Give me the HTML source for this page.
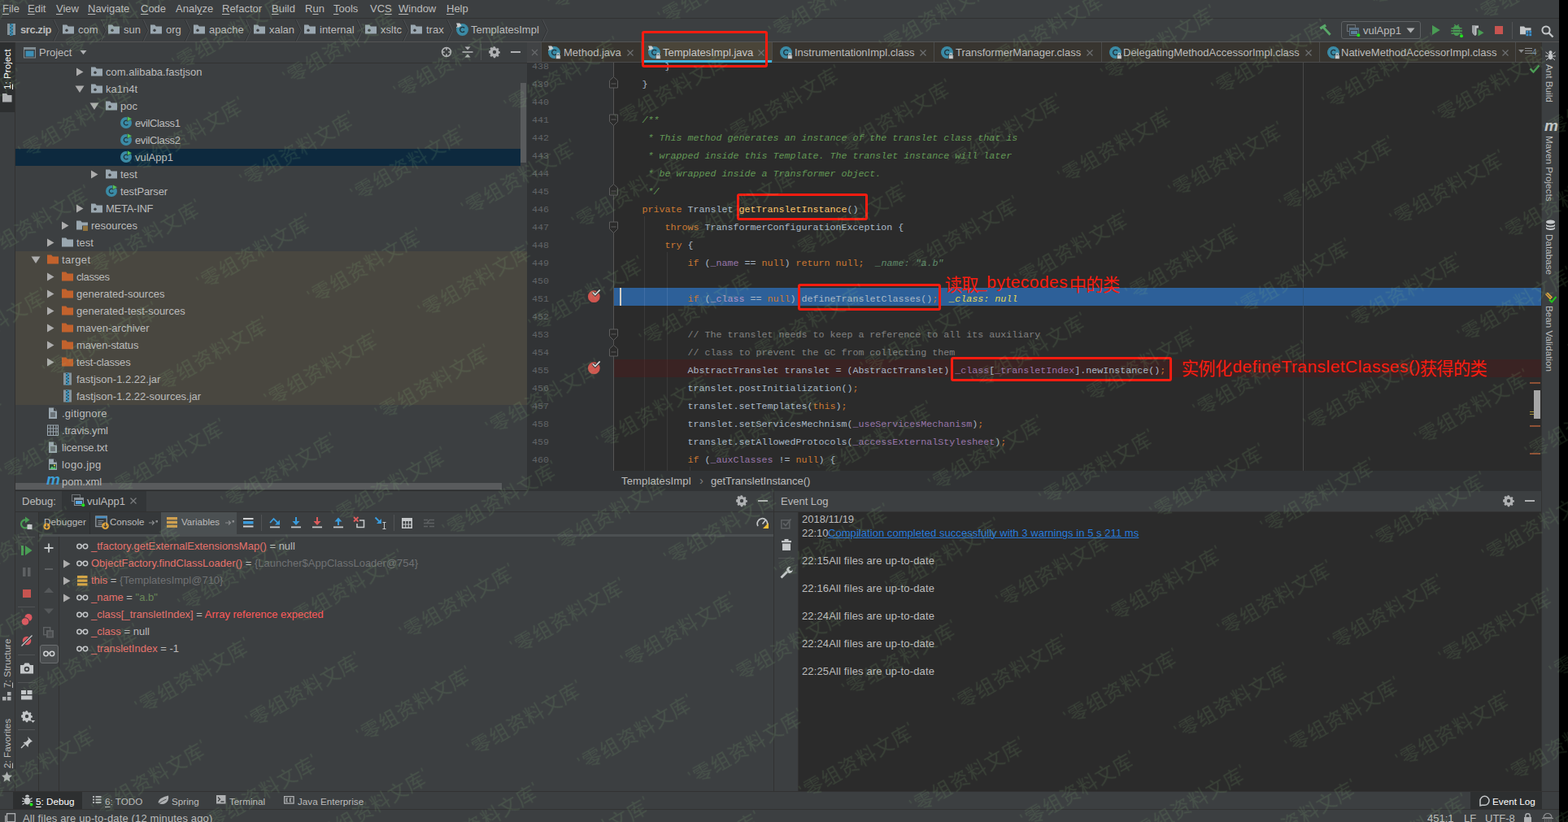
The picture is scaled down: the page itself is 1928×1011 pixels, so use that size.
<!DOCTYPE html>
<html><head><meta charset="utf-8"><title>IDE</title><style>html,body{margin:0;padding:0}
body{width:1928px;height:1011px;overflow:hidden;background:#3c3f41;position:relative;font-family:"Liberation Sans",sans-serif;font-size:13px;color:#bbbbbb}
body>div,body>span,body>svg,.a{position:absolute;display:block}
span{white-space:pre;line-height:16px}
.m{font-family:"Liberation Mono",monospace}

.code span{font-family:"Liberation Mono",monospace;font-size:11.667px;line-height:22px}
.code b{font-weight:normal}
.ln{color:#606366}
u{text-decoration-thickness:1px;text-underline-offset:1.5px}
</style></head><body>
<div style="left:0px;top:0px;width:1917px;height:22px;background:#3c3f41;"></div>
<div style="left:0px;top:22px;width:1917px;height:1px;background:#323232;"></div>
<span style="left:3px;top:2.50px;color:#bbbbbb;font-size:13px;"><u>F</u>ile</span>
<span style="left:34px;top:2.50px;color:#bbbbbb;font-size:13px;"><u>E</u>dit</span>
<span style="left:69px;top:2.50px;color:#bbbbbb;font-size:13px;"><u>V</u>iew</span>
<span style="left:108px;top:2.50px;color:#bbbbbb;font-size:13px;"><u>N</u>avigate</span>
<span style="left:173px;top:2.50px;color:#bbbbbb;font-size:13px;"><u>C</u>ode</span>
<span style="left:216px;top:2.50px;color:#bbbbbb;font-size:13px;">Anal<u>y</u>ze</span>
<span style="left:273px;top:2.50px;color:#bbbbbb;font-size:13px;"><u>R</u>efactor</span>
<span style="left:334px;top:2.50px;color:#bbbbbb;font-size:13px;"><u>B</u>uild</span>
<span style="left:375px;top:2.50px;color:#bbbbbb;font-size:13px;">R<u>u</u>n</span>
<span style="left:410px;top:2.50px;color:#bbbbbb;font-size:13px;"><u>T</u>ools</span>
<span style="left:455px;top:2.50px;color:#bbbbbb;font-size:13px;">VC<u>S</u></span>
<span style="left:490px;top:2.50px;color:#bbbbbb;font-size:13px;"><u>W</u>indow</span>
<span style="left:549px;top:2.50px;color:#bbbbbb;font-size:13px;"><u>H</u>elp</span>
<div style="left:0px;top:23px;width:1917px;height:28px;background:#3c3f41;"></div>
<div style="left:0px;top:51px;width:1917px;height:1px;background:#555555;"></div>
<div style="left:0px;top:52px;width:18px;height:921px;background:#3c3f41;"></div>
<div style="left:18px;top:52px;width:1px;height:921px;background:#323232;"></div>
<div style="left:0px;top:52px;width:18px;height:86px;background:#2d2f30;"></div>
<div style="left:1895px;top:52px;width:22px;height:921px;background:#3c3f41;"></div>
<div style="left:1895px;top:52px;width:1px;height:921px;background:#323232;"></div>
<div style="left:1917px;top:0px;width:11px;height:1011px;background:#000000;"></div>
<svg style="left:9px;top:29px;" width="10" height="15" viewBox="0 0 10 15"><rect x="0" y="0" width="10" height="14" fill="#87939a"/><rect x="3" y="0" width="4" height="16" fill="#3d8fb5"/><path d="M3 1h2M5 3h2M3 5h2M5 7h2M3 9h2M5 11h2M3 13h2M5 15h2" stroke="#2b4450" stroke-width="1"/></svg>
<span style="left:25px;top:28.50px;color:#bbbbbb;font-size:13px;font-weight:bold;letter-spacing:-.45px">src.zip</span>
<svg style="left:76px;top:28px;" width="16" height="16" viewBox="0 0 16 16"><path d="M1 2.5h5.2l1.6 2H15v9H1z" fill="#9aa7b0"/><circle cx="6" cy="9.2" r="1.7" fill="#3c3f41"/></svg>
<span style="left:96px;top:28.50px;color:#bbbbbb;font-size:13px;">com</span>
<svg style="left:132px;top:28px;" width="16" height="16" viewBox="0 0 16 16"><path d="M1 2.5h5.2l1.6 2H15v9H1z" fill="#9aa7b0"/><circle cx="6" cy="9.2" r="1.7" fill="#3c3f41"/></svg>
<span style="left:152px;top:28.50px;color:#bbbbbb;font-size:13px;">sun</span>
<svg style="left:184px;top:28px;" width="16" height="16" viewBox="0 0 16 16"><path d="M1 2.5h5.2l1.6 2H15v9H1z" fill="#9aa7b0"/><circle cx="6" cy="9.2" r="1.7" fill="#3c3f41"/></svg>
<span style="left:204px;top:28.50px;color:#bbbbbb;font-size:13px;">org</span>
<svg style="left:237px;top:28px;" width="16" height="16" viewBox="0 0 16 16"><path d="M1 2.5h5.2l1.6 2H15v9H1z" fill="#9aa7b0"/><circle cx="6" cy="9.2" r="1.7" fill="#3c3f41"/></svg>
<span style="left:257px;top:28.50px;color:#bbbbbb;font-size:13px;">apache</span>
<svg style="left:311px;top:28px;" width="16" height="16" viewBox="0 0 16 16"><path d="M1 2.5h5.2l1.6 2H15v9H1z" fill="#9aa7b0"/><circle cx="6" cy="9.2" r="1.7" fill="#3c3f41"/></svg>
<span style="left:331px;top:28.50px;color:#bbbbbb;font-size:13px;">xalan</span>
<svg style="left:373px;top:28px;" width="16" height="16" viewBox="0 0 16 16"><path d="M1 2.5h5.2l1.6 2H15v9H1z" fill="#9aa7b0"/><circle cx="6" cy="9.2" r="1.7" fill="#3c3f41"/></svg>
<span style="left:393px;top:28.50px;color:#bbbbbb;font-size:13px;">internal</span>
<svg style="left:448px;top:28px;" width="16" height="16" viewBox="0 0 16 16"><path d="M1 2.5h5.2l1.6 2H15v9H1z" fill="#9aa7b0"/><circle cx="6" cy="9.2" r="1.7" fill="#3c3f41"/></svg>
<span style="left:468px;top:28.50px;color:#bbbbbb;font-size:13px;">xsltc</span>
<svg style="left:504px;top:28px;" width="16" height="16" viewBox="0 0 16 16"><path d="M1 2.5h5.2l1.6 2H15v9H1z" fill="#9aa7b0"/><circle cx="6" cy="9.2" r="1.7" fill="#3c3f41"/></svg>
<span style="left:524px;top:28.50px;color:#bbbbbb;font-size:13px;">trax</span>
<svg style="left:560px;top:28px;" width="17" height="17" viewBox="0 0 16 16"><circle cx="8" cy="8" r="7" fill="#3b8ba6"/><path d="M10.400 9.900a2.900 2.900 0 1 1 0-3.800" fill="none" stroke="#21343d" stroke-width="1.300"/><path d="M1 0.5l4 0 2 3-4 2.2z" fill="#c9ccce"/><path d="M1.2 5.5l2.2-2" stroke="#c9ccce" stroke-width="1"/></svg>
<span style="left:579px;top:28.50px;color:#bbbbbb;font-size:13px;">TemplatesImpl</span>
<svg style="left:65px;top:24px;" width="8" height="27" viewBox="0 0 8 27"><path d="M0.5 0.5l6 13-6 13" fill="none" stroke="#2f3133" stroke-width="1"/><path d="M1.5 0.5l6 13-6 13" fill="none" stroke="#505355" stroke-width="1"/></svg>
<svg style="left:123px;top:24px;" width="8" height="27" viewBox="0 0 8 27"><path d="M0.5 0.5l6 13-6 13" fill="none" stroke="#2f3133" stroke-width="1"/><path d="M1.5 0.5l6 13-6 13" fill="none" stroke="#505355" stroke-width="1"/></svg>
<svg style="left:175px;top:24px;" width="8" height="27" viewBox="0 0 8 27"><path d="M0.5 0.5l6 13-6 13" fill="none" stroke="#2f3133" stroke-width="1"/><path d="M1.5 0.5l6 13-6 13" fill="none" stroke="#505355" stroke-width="1"/></svg>
<svg style="left:227px;top:24px;" width="8" height="27" viewBox="0 0 8 27"><path d="M0.5 0.5l6 13-6 13" fill="none" stroke="#2f3133" stroke-width="1"/><path d="M1.5 0.5l6 13-6 13" fill="none" stroke="#505355" stroke-width="1"/></svg>
<svg style="left:301px;top:24px;" width="8" height="27" viewBox="0 0 8 27"><path d="M0.5 0.5l6 13-6 13" fill="none" stroke="#2f3133" stroke-width="1"/><path d="M1.5 0.5l6 13-6 13" fill="none" stroke="#505355" stroke-width="1"/></svg>
<svg style="left:363px;top:24px;" width="8" height="27" viewBox="0 0 8 27"><path d="M0.5 0.5l6 13-6 13" fill="none" stroke="#2f3133" stroke-width="1"/><path d="M1.5 0.5l6 13-6 13" fill="none" stroke="#505355" stroke-width="1"/></svg>
<svg style="left:438px;top:24px;" width="8" height="27" viewBox="0 0 8 27"><path d="M0.5 0.5l6 13-6 13" fill="none" stroke="#2f3133" stroke-width="1"/><path d="M1.5 0.5l6 13-6 13" fill="none" stroke="#505355" stroke-width="1"/></svg>
<svg style="left:495px;top:24px;" width="8" height="27" viewBox="0 0 8 27"><path d="M0.5 0.5l6 13-6 13" fill="none" stroke="#2f3133" stroke-width="1"/><path d="M1.5 0.5l6 13-6 13" fill="none" stroke="#505355" stroke-width="1"/></svg>
<svg style="left:549px;top:24px;" width="8" height="27" viewBox="0 0 8 27"><path d="M0.5 0.5l6 13-6 13" fill="none" stroke="#2f3133" stroke-width="1"/><path d="M1.5 0.5l6 13-6 13" fill="none" stroke="#505355" stroke-width="1"/></svg>
<svg style="left:666px;top:24px;" width="8" height="27" viewBox="0 0 8 27"><path d="M0.5 0.5l6 13-6 13" fill="none" stroke="#2f3133" stroke-width="1"/><path d="M1.5 0.5l6 13-6 13" fill="none" stroke="#505355" stroke-width="1"/></svg>
<svg style="left:1621px;top:29px;" width="18" height="18" viewBox="0 0 18 18"><path d="M2.300 6.200L9.200 2" stroke="#59a869" stroke-width="3.300"/><path d="M6.300 4.800l8.300 9" stroke="#59a869" stroke-width="2.800"/></svg>
<div style="left:1649px;top:26px;width:96px;height:20px;border:1px solid #5e6163;border-radius:3px;background:#3c3f41"></div>
<svg style="left:1656px;top:30px;" width="18" height="16" viewBox="0 0 18 16"><rect x=".5" y=".5" width="10" height="8" fill="none" stroke="#6e7275"/><rect x="3.500" y="4.500" width="11" height="9" fill="#3c3f41" stroke="#5b7184"/><rect x="4" y="5" width="10" height="2" fill="#5b7184"/><rect x="5" y="8" width="8" height="4" fill="#5b7f98"/><circle cx="14.3" cy="13.2" r="2" fill="#21e51c"/></svg>
<span style="left:1676px;top:29.50px;color:#bbbbbb;font-size:13px;">vulApp1</span>
<svg style="left:1728px;top:33px;" width="12" height="9" viewBox="0 0 12 9"><path d="M1.5 1.5h10l-5 6z" fill="#afb1b3"/></svg>
<svg style="left:1760px;top:30px;" width="11" height="14" viewBox="0 0 11 14"><path d="M1 1l9.700 6L1 13z" fill="#499c54"/></svg>
<svg style="left:1782px;top:29px;" width="18" height="18" viewBox="0 0 18 18"><path d="M5 6.500a4 4.200 0 0 1 8 0v4a4 4.500 0 0 1-8 0z" fill="#499c54"/><path d="M6.500 1l1.500 2.500M11.500 1l-1.500 2.500" stroke="#499c54" stroke-width="1.300"/><path d="M2.500 5.800h3M15.500 5.800h-3M2 9h3.500M16 9h-3.500M2.500 12.300h3M15.500 12.300h-3" stroke="#499c54" stroke-width="1.500"/><path d="M5.500 7.300h7M5.500 10.600h7" stroke="#3c3f41" stroke-width="1"/><circle cx="15" cy="15.300" r="2" fill="#21e51c"/></svg>
<svg style="left:1808px;top:29px;" width="18" height="18" viewBox="0 0 18 18"><path d="M2 2.500h8v3h-2.500v8l-1.500 1.500c-3-1.500-4-4-4-7z" fill="#c4c7c9"/><path d="M6.500 2.500v12" stroke="#3c3f41" stroke-width=".01"/><path d="M2 2.500h4v12.200c-3-1.500-4-4-4-7z" fill="#9da1a4"/><path d="M9.500 7l7 4.200-7 4.300z" fill="#499c54"/></svg>
<div style="left:1838px;top:32px;width:10px;height:10px;background:#c75450;"></div>
<div style="left:1859px;top:27px;width:1px;height:21px;background:#515355;"></div>
<svg style="left:1867px;top:29px;" width="18" height="18" viewBox="0 0 18 18"><path d="M2 3.500h5l1.500 1.800H15.500v3.200H9v4.700H2z" fill="#c4c7c9"/><rect x="9.500" y="8.800" width="2.800" height="2.800" fill="#3a91cf"/><rect x="13.300" y="8.800" width="2.800" height="2.800" fill="#3a91cf"/><rect x="9.500" y="12.400" width="2.800" height="2.800" fill="#3a91cf"/><rect x="13.300" y="12.400" width="2.800" height="2.800" fill="#3a91cf"/></svg>
<svg style="left:1894px;top:29.5px;" width="18" height="18" viewBox="0 0 18 18"><circle cx="7" cy="7" r="4.600" fill="none" stroke="#c4c7c9" stroke-width="2"/><path d="M10.500 10.500l5 5" stroke="#c4c7c9" stroke-width="2.400"/></svg>
<div style="left:19px;top:52px;width:629px;height:25px;background:#3c3f41;"></div>
<div style="left:19px;top:77px;width:629px;height:1px;background:#323232;"></div>
<svg style="left:29px;top:58px;" width="15" height="14" viewBox="0 0 15 14"><rect x=".5" y=".5" width="14" height="12.500" fill="#3c3f41" stroke="#7f8b91"/><rect x="1" y="1" width="13" height="2" fill="#7f8b91"/><rect x="2.500" y="4.500" width="10" height="7" fill="#3d8fb5"/></svg>
<span style="left:48px;top:56.50px;color:#bbbbbb;font-size:13px;">Project</span>
<svg style="left:98px;top:61px;" width="9" height="7" viewBox="0 0 9 7"><path d="M.5 1h8l-4 5z" fill="#afb1b3"/></svg>
<svg style="left:541px;top:56px;" width="16" height="16" viewBox="0 0 16 16"><circle cx="8" cy="8" r="5.400" fill="none" stroke="#afb1b3" stroke-width="1.600"/><path d="M8 2.600v3.200M8 10.200v3.200M2.600 8h3.200M10.200 8h3.200" stroke="#afb1b3" stroke-width="1.600"/></svg>
<svg style="left:567px;top:56px;" width="16" height="16" viewBox="0 0 16 16"><path d="M1.500 8h13" stroke="#afb1b3" stroke-width="1.600"/><path d="M4.500 1.500h7l-3.500 4z M4.500 14.500h7l-3.500-4z" fill="#afb1b3"/></svg>
<div style="left:591px;top:54px;width:1px;height:20px;background:#515355;"></div>
<svg style="left:600px;top:56px;" width="16" height="16" viewBox="0 0 16 16"><path d="M8 1.200l1.200.1.500 1.800 1.300.6 1.700-.9 1.600 1.600-.9 1.700.6 1.300 1.800.5v2.300l-1.800.5-.6 1.300.9 1.700-1.600 1.600-1.700-.9-1.300.6-.5 1.800H6.800l-.5-1.800-1.300-.6-1.700.9-1.600-1.600.9-1.700-.6-1.300-1.800-.5V6.900l1.800-.5.6-1.300-.9-1.700 1.600-1.600 1.700.9 1.300-.6.5-1.800z" fill="#afb1b3" transform="translate(8 8) scale(.88) translate(-8 -8.600)"/><circle cx="8" cy="8" r="2.200" fill="#3c3f41"/></svg>
<div style="left:628px;top:63px;width:12px;height:2px;background:#afb1b3;"></div>
<div style="left:19px;top:309px;width:629px;height:189px;background:#494740;"></div>
<div style="left:19px;top:183px;width:621px;height:21px;background:#0d293e;"></div>
<div style="left:640px;top:78px;width:8px;height:231px;background:#3c3f41;"></div>
<div style="left:640px;top:102px;width:7px;height:98px;background:#595b5d;"></div>
<div style="left:19px;top:594px;width:598px;height:8px;background:#595b5d;"></div>
<svg style="left:93px;top:83px;" width="10" height="11" viewBox="0 0 10 11"><path d="M1 .5l8.500 5-8.500 5z" fill="#adadad"/></svg>
<svg style="left:111px;top:80px;" width="16" height="16" viewBox="0 0 16 16"><path d="M1 2.5h5.2l1.6 2H15v9H1z" fill="#9aa7b0"/><circle cx="6" cy="9.2" r="1.7" fill="#3c3f41"/></svg>
<span style="left:130px;top:81.00px;color:#bbbbbb;font-size:13px;">com.alibaba.fastjson</span>
<svg style="left:92px;top:105px;" width="12" height="10" viewBox="0 0 12 10"><path d="M.5 .5h11l-5.500 8.500z" fill="#adadad"/></svg>
<svg style="left:111px;top:101px;" width="16" height="16" viewBox="0 0 16 16"><path d="M1 2.5h5.2l1.6 2H15v9H1z" fill="#9aa7b0"/><circle cx="6" cy="9.2" r="1.7" fill="#3c3f41"/></svg>
<span style="left:130px;top:102.00px;color:#bbbbbb;font-size:13px;">ka1n4t</span>
<svg style="left:110px;top:126px;" width="12" height="10" viewBox="0 0 12 10"><path d="M.5 .5h11l-5.500 8.500z" fill="#adadad"/></svg>
<svg style="left:129px;top:122px;" width="16" height="16" viewBox="0 0 16 16"><path d="M1 2.5h5.2l1.6 2H15v9H1z" fill="#9aa7b0"/><circle cx="6" cy="9.2" r="1.7" fill="#3c3f41"/></svg>
<span style="left:148px;top:123.00px;color:#bbbbbb;font-size:13px;">poc</span>
<svg style="left:147px;top:143px;" width="16" height="16" viewBox="0 0 16 16"><circle cx="8" cy="8" r="7" fill="#3b8ba6"/><path d="M10.400 9.900a2.900 2.900 0 1 1 0-3.800" fill="none" stroke="#21343d" stroke-width="1.300"/><path d="M9.500 0l6 3.200-6 3.200z" fill="#57c355" stroke="#3c3f41" stroke-width=".6"/></svg>
<span style="left:166px;top:144.00px;color:#bbbbbb;font-size:13px;letter-spacing:-0.37px">evilClass1</span>
<svg style="left:147px;top:164px;" width="16" height="16" viewBox="0 0 16 16"><circle cx="8" cy="8" r="7" fill="#3b8ba6"/><path d="M10.400 9.900a2.900 2.900 0 1 1 0-3.800" fill="none" stroke="#21343d" stroke-width="1.300"/><path d="M9.500 0l6 3.200-6 3.200z" fill="#57c355" stroke="#3c3f41" stroke-width=".6"/></svg>
<span style="left:166px;top:165.00px;color:#bbbbbb;font-size:13px;letter-spacing:-0.37px">evilClass2</span>
<svg style="left:147px;top:185px;" width="16" height="16" viewBox="0 0 16 16"><circle cx="8" cy="8" r="7" fill="#3b8ba6"/><path d="M10.400 9.900a2.900 2.900 0 1 1 0-3.800" fill="none" stroke="#21343d" stroke-width="1.300"/><path d="M9.500 0l6 3.200-6 3.200z" fill="#57c355" stroke="#0d293e" stroke-width=".6"/></svg>
<span style="left:166px;top:186.00px;color:#bbbbbb;font-size:13px;">vulApp1</span>
<svg style="left:111px;top:209px;" width="10" height="11" viewBox="0 0 10 11"><path d="M1 .5l8.500 5-8.500 5z" fill="#adadad"/></svg>
<svg style="left:129px;top:206px;" width="16" height="16" viewBox="0 0 16 16"><path d="M1 2.5h5.2l1.6 2H15v9H1z" fill="#9aa7b0"/><circle cx="6" cy="9.2" r="1.7" fill="#3c3f41"/></svg>
<span style="left:148px;top:207.00px;color:#bbbbbb;font-size:13px;">test</span>
<svg style="left:129px;top:227px;" width="16" height="16" viewBox="0 0 16 16"><circle cx="8" cy="8" r="7" fill="#3b8ba6"/><path d="M10.400 9.900a2.900 2.900 0 1 1 0-3.800" fill="none" stroke="#21343d" stroke-width="1.300"/><path d="M9.500 0l6 3.200-6 3.200z" fill="#57c355" stroke="#3c3f41" stroke-width=".6"/></svg>
<span style="left:148px;top:228.00px;color:#bbbbbb;font-size:13px;letter-spacing:-0.13px">testParser</span>
<svg style="left:93px;top:251px;" width="10" height="11" viewBox="0 0 10 11"><path d="M1 .5l8.500 5-8.500 5z" fill="#adadad"/></svg>
<svg style="left:111px;top:248px;" width="16" height="16" viewBox="0 0 16 16"><path d="M1 2.5h5.2l1.6 2H15v9H1z" fill="#9aa7b0"/><circle cx="6" cy="9.2" r="1.7" fill="#3c3f41"/></svg>
<span style="left:130px;top:249.00px;color:#bbbbbb;font-size:13px;letter-spacing:-0.27px">META-INF</span>
<svg style="left:75px;top:272px;" width="10" height="11" viewBox="0 0 10 11"><path d="M1 .5l8.500 5-8.500 5z" fill="#adadad"/></svg>
<svg style="left:93px;top:269px;" width="16" height="16" viewBox="0 0 16 16"><path d="M1 2.5h5.2l1.6 2H15v9H1z" fill="#9aa7b0"/><rect x="8" y="8.500" width="7.500" height="7.500" fill="#3c3f41"/><path d="M9 10h6M9 12h6M9 14h6" stroke="#e2a63c" stroke-width="1.200"/></svg>
<span style="left:112px;top:270.00px;color:#bbbbbb;font-size:13px;">resources</span>
<svg style="left:57px;top:293px;" width="10" height="11" viewBox="0 0 10 11"><path d="M1 .5l8.500 5-8.500 5z" fill="#adadad"/></svg>
<svg style="left:75px;top:290px;" width="16" height="16" viewBox="0 0 16 16"><path d="M1 2.5h5.2l1.6 2H15v9H1z" fill="#9aa7b0"/></svg>
<span style="left:94px;top:291.00px;color:#bbbbbb;font-size:13px;">test</span>
<svg style="left:38px;top:315px;" width="12" height="10" viewBox="0 0 12 10"><path d="M.5 .5h11l-5.500 8.500z" fill="#adadad"/></svg>
<svg style="left:57px;top:311px;" width="16" height="16" viewBox="0 0 16 16"><path d="M1 2.5h5.2l1.6 2H15v9H1z" fill="#c2622d"/></svg>
<span style="left:76px;top:312.00px;color:#bbbbbb;font-size:13px;letter-spacing:0.35px">target</span>
<svg style="left:57px;top:335px;" width="10" height="11" viewBox="0 0 10 11"><path d="M1 .5l8.500 5-8.500 5z" fill="#adadad"/></svg>
<svg style="left:75px;top:332px;" width="16" height="16" viewBox="0 0 16 16"><path d="M1 2.5h5.2l1.6 2H15v9H1z" fill="#c2622d"/></svg>
<span style="left:94px;top:333.00px;color:#bbbbbb;font-size:13px;letter-spacing:-0.4px">classes</span>
<svg style="left:57px;top:356px;" width="10" height="11" viewBox="0 0 10 11"><path d="M1 .5l8.500 5-8.500 5z" fill="#adadad"/></svg>
<svg style="left:75px;top:353px;" width="16" height="16" viewBox="0 0 16 16"><path d="M1 2.5h5.2l1.6 2H15v9H1z" fill="#c2622d"/></svg>
<span style="left:94px;top:354.00px;color:#bbbbbb;font-size:13px;">generated-sources</span>
<svg style="left:57px;top:377px;" width="10" height="11" viewBox="0 0 10 11"><path d="M1 .5l8.500 5-8.500 5z" fill="#adadad"/></svg>
<svg style="left:75px;top:374px;" width="16" height="16" viewBox="0 0 16 16"><path d="M1 2.5h5.2l1.6 2H15v9H1z" fill="#c2622d"/></svg>
<span style="left:94px;top:375.00px;color:#bbbbbb;font-size:13px;">generated-test-sources</span>
<svg style="left:57px;top:398px;" width="10" height="11" viewBox="0 0 10 11"><path d="M1 .5l8.500 5-8.500 5z" fill="#adadad"/></svg>
<svg style="left:75px;top:395px;" width="16" height="16" viewBox="0 0 16 16"><path d="M1 2.5h5.2l1.6 2H15v9H1z" fill="#c2622d"/></svg>
<span style="left:94px;top:396.00px;color:#bbbbbb;font-size:13px;">maven-archiver</span>
<svg style="left:57px;top:419px;" width="10" height="11" viewBox="0 0 10 11"><path d="M1 .5l8.500 5-8.500 5z" fill="#adadad"/></svg>
<svg style="left:75px;top:416px;" width="16" height="16" viewBox="0 0 16 16"><path d="M1 2.5h5.2l1.6 2H15v9H1z" fill="#c2622d"/></svg>
<span style="left:94px;top:417.00px;color:#bbbbbb;font-size:13px;letter-spacing:-0.15px">maven-status</span>
<svg style="left:57px;top:440px;" width="10" height="11" viewBox="0 0 10 11"><path d="M1 .5l8.500 5-8.500 5z" fill="#adadad"/></svg>
<svg style="left:75px;top:437px;" width="16" height="16" viewBox="0 0 16 16"><path d="M1 2.5h5.2l1.6 2H15v9H1z" fill="#c2622d"/></svg>
<span style="left:94px;top:438.00px;color:#bbbbbb;font-size:13px;letter-spacing:-0.18px">test-classes</span>
<svg style="left:75px;top:458px;" width="16" height="16" viewBox="0 0 16 16"><rect x="3" y="0.500" width="10" height="15" fill="#87939a"/><rect x="6" y=".5" width="4" height="15" fill="#3d8fb5"/><path d="M6 1.500h2M8 3.500h2M6 5.500h2M8 7.500h2M6 9.500h2M8 11.500h2M6 13.500h2" stroke="#2b4450" stroke-width="1"/></svg>
<span style="left:94px;top:459.00px;color:#bbbbbb;font-size:13px;">fastjson-1.2.22.jar</span>
<svg style="left:75px;top:479px;" width="16" height="16" viewBox="0 0 16 16"><rect x="3" y="0.500" width="10" height="15" fill="#87939a"/><rect x="6" y=".5" width="4" height="15" fill="#3d8fb5"/><path d="M6 1.500h2M8 3.500h2M6 5.500h2M8 7.500h2M6 9.500h2M8 11.500h2M6 13.500h2" stroke="#2b4450" stroke-width="1"/></svg>
<span style="left:94px;top:480.00px;color:#bbbbbb;font-size:13px;">fastjson-1.2.22-sources.jar</span>
<svg style="left:57px;top:500px;" width="16" height="16" viewBox="0 0 16 16"><path d="M3 1.500h6.500l3.500 3.500v10H3z" fill="#9aa7b0"/><path d="M9 1v4.500h4.500" fill="#3c3f41"/><path d="M5 8h6M5 10h6M5 12h6" stroke="#3c3f41" stroke-width="1"/></svg>
<span style="left:76px;top:501.00px;color:#bbbbbb;font-size:13px;letter-spacing:0.23px">.gitignore</span>
<svg style="left:57px;top:521px;" width="16" height="16" viewBox="0 0 16 16"><rect x="1.500" y="2" width="13" height="12.500" fill="#3c3f41" stroke="#9aa7b0"/><path d="M5 2v12.500M8.500 2v12.500M12 2v12.500M1.500 6h13M1.500 10h13" stroke="#9aa7b0" stroke-width="1"/></svg>
<span style="left:76px;top:522.00px;color:#bbbbbb;font-size:13px;letter-spacing:-0.15px">.travis.yml</span>
<svg style="left:57px;top:542px;" width="16" height="16" viewBox="0 0 16 16"><path d="M3 1.500h6.500l3.500 3.500v10H3z" fill="#9aa7b0"/><path d="M9 1v4.500h4.500" fill="#3c3f41"/><path d="M5 8h6M5 10h6M5 12h6" stroke="#3c3f41" stroke-width="1"/></svg>
<span style="left:76px;top:543.00px;color:#bbbbbb;font-size:13px;letter-spacing:-0.15px">license.txt</span>
<svg style="left:57px;top:563px;" width="16" height="16" viewBox="0 0 16 16"><path d="M3 1.500h6.500l3.500 3.500v10H3z" fill="#9aa7b0"/><path d="M9 1v4.500h4.500" fill="#3c3f41"/><rect x="4" y="8" width="8" height="6" fill="#2b4a3a"/><path d="M4 14l3-3.500 2 2 1.500-1.500 1.500 3z" fill="#59c374"/><circle cx="10" cy="9.500" r="1" fill="#f4d03f"/></svg>
<span style="left:76px;top:564.00px;color:#bbbbbb;font-size:13px;letter-spacing:0.39px">logo.jpg</span>
<span style="left:57px;top:582.42px;color:#3d9fd6;font-size:19px;font-style:italic;font-weight:bold">m</span>
<span style="left:76px;top:585.00px;color:#bbbbbb;font-size:13px;">pom.xml</span>
<div style="left:648px;top:52px;width:1247px;height:24px;background:#383530;"></div>
<div style="left:648px;top:76px;width:1247px;height:1px;background:#4b4b4b;"></div>
<div style="left:648px;top:52px;width:17px;height:24px;background:#414345;"></div>
<svg style="left:653px;top:60px;" width="9" height="9" viewBox="0 0 9 9"><path d="M1 1l7 7M8 1l-7 7" stroke="#696b6d" stroke-width="1.100"/></svg>
<div style="left:665px;top:52px;width:1px;height:25px;background:#4b4b4b;"></div>
<svg style="left:673px;top:56px;" width="17" height="17" viewBox="0 0 16 16"><circle cx="8" cy="8" r="7" fill="#3b8ba6"/><path d="M10.400 9.900a2.900 2.900 0 1 1 0-3.800" fill="none" stroke="#21343d" stroke-width="1.300"/><path d="M1 0.5l4 0 2 3-4 2.2z" fill="#c9ccce"/><path d="M1.2 5.5l2.2-2" stroke="#c9ccce" stroke-width="1"/><rect x="9.800" y="11" width="5.400" height="4.600" rx=".5" fill="#c9ccce" stroke="#383530" stroke-width=".6"/><path d="M11.300 11.200v-1.300a1.200 1.200 0 0 1 2.400 0v1.300" fill="none" stroke="#c9ccce" stroke-width="1"/></svg>
<span style="left:693px;top:56.50px;color:#bbbbbb;font-size:13px;">Method.java</span>
<svg style="left:770px;top:59.5px;" width="10" height="10" viewBox="0 0 10 10"><path d="M1.500 1.500l7 7M8.500 1.500l-7 7" stroke="#6e7072" stroke-width="1.200"/></svg>
<div style="left:789px;top:52px;width:160px;height:24px;background:#4a4539;"></div>
<div style="left:789px;top:74px;width:160px;height:3px;background:#3fb2dc;"></div>
<div style="left:788px;top:52px;width:1px;height:25px;background:#4b4b4b;"></div>
<svg style="left:796px;top:56px;" width="17" height="17" viewBox="0 0 16 16"><circle cx="8" cy="8" r="7" fill="#3b8ba6"/><path d="M10.400 9.900a2.900 2.900 0 1 1 0-3.800" fill="none" stroke="#21343d" stroke-width="1.300"/><path d="M1 0.5l4 0 2 3-4 2.2z" fill="#c9ccce"/><path d="M1.2 5.5l2.2-2" stroke="#c9ccce" stroke-width="1"/><rect x="9.800" y="11" width="5.400" height="4.600" rx=".5" fill="#c9ccce" stroke="#4a4539" stroke-width=".6"/><path d="M11.300 11.200v-1.300a1.200 1.200 0 0 1 2.400 0v1.300" fill="none" stroke="#c9ccce" stroke-width="1"/></svg>
<span style="left:815px;top:56.50px;color:#c8c8c8;font-size:13px;">TemplatesImpl.java</span>
<svg style="left:931px;top:59.5px;" width="10" height="10" viewBox="0 0 10 10"><path d="M1.500 1.500l7 7M8.500 1.500l-7 7" stroke="#6e7072" stroke-width="1.200"/></svg>
<div style="left:949px;top:52px;width:1px;height:25px;background:#4b4b4b;"></div>
<svg style="left:958px;top:56px;" width="17" height="17" viewBox="0 0 16 16"><circle cx="8" cy="8" r="7" fill="#3b8ba6"/><path d="M10.400 9.900a2.900 2.900 0 1 1 0-3.800" fill="none" stroke="#21343d" stroke-width="1.300"/><rect x="9.800" y="11" width="5.400" height="4.600" rx=".5" fill="#c9ccce" stroke="#383530" stroke-width=".6"/><path d="M11.300 11.200v-1.300a1.200 1.200 0 0 1 2.400 0v1.300" fill="none" stroke="#c9ccce" stroke-width="1"/></svg>
<span style="left:977px;top:56.50px;color:#bbbbbb;font-size:13px;">InstrumentationImpl.class</span>
<svg style="left:1130px;top:59.5px;" width="10" height="10" viewBox="0 0 10 10"><path d="M1.500 1.500l7 7M8.500 1.500l-7 7" stroke="#6e7072" stroke-width="1.200"/></svg>
<div style="left:1148px;top:52px;width:1px;height:25px;background:#4b4b4b;"></div>
<svg style="left:1156px;top:56px;" width="17" height="17" viewBox="0 0 16 16"><circle cx="8" cy="8" r="7" fill="#3b8ba6"/><path d="M10.400 9.900a2.900 2.900 0 1 1 0-3.800" fill="none" stroke="#21343d" stroke-width="1.300"/><rect x="9.800" y="11" width="5.400" height="4.600" rx=".5" fill="#c9ccce" stroke="#383530" stroke-width=".6"/><path d="M11.300 11.200v-1.300a1.200 1.200 0 0 1 2.400 0v1.300" fill="none" stroke="#c9ccce" stroke-width="1"/></svg>
<span style="left:1175px;top:56.50px;color:#bbbbbb;font-size:13px;">TransformerManager.class</span>
<svg style="left:1335px;top:59.5px;" width="10" height="10" viewBox="0 0 10 10"><path d="M1.500 1.500l7 7M8.500 1.500l-7 7" stroke="#6e7072" stroke-width="1.200"/></svg>
<div style="left:1354px;top:52px;width:1px;height:25px;background:#4b4b4b;"></div>
<svg style="left:1363px;top:56px;" width="17" height="17" viewBox="0 0 16 16"><circle cx="8" cy="8" r="7" fill="#3b8ba6"/><path d="M10.400 9.900a2.900 2.900 0 1 1 0-3.800" fill="none" stroke="#21343d" stroke-width="1.300"/><rect x="9.800" y="11" width="5.400" height="4.600" rx=".5" fill="#c9ccce" stroke="#383530" stroke-width=".6"/><path d="M11.300 11.200v-1.300a1.200 1.200 0 0 1 2.400 0v1.300" fill="none" stroke="#c9ccce" stroke-width="1"/></svg>
<span style="left:1381px;top:56.50px;color:#bbbbbb;font-size:13px;">DelegatingMethodAccessorImpl.class</span>
<svg style="left:1604px;top:59.5px;" width="10" height="10" viewBox="0 0 10 10"><path d="M1.500 1.500l7 7M8.500 1.500l-7 7" stroke="#6e7072" stroke-width="1.200"/></svg>
<div style="left:1622px;top:52px;width:1px;height:25px;background:#4b4b4b;"></div>
<svg style="left:1631px;top:56px;" width="17" height="17" viewBox="0 0 16 16"><circle cx="8" cy="8" r="7" fill="#3b8ba6"/><path d="M10.400 9.900a2.900 2.900 0 1 1 0-3.800" fill="none" stroke="#21343d" stroke-width="1.300"/><rect x="9.800" y="11" width="5.400" height="4.600" rx=".5" fill="#c9ccce" stroke="#383530" stroke-width=".6"/><path d="M11.300 11.200v-1.300a1.200 1.200 0 0 1 2.400 0v1.300" fill="none" stroke="#c9ccce" stroke-width="1"/></svg>
<span style="left:1649px;top:56.50px;color:#bbbbbb;font-size:13px;">NativeMethodAccessorImpl.class</span>
<svg style="left:1846px;top:59.5px;" width="10" height="10" viewBox="0 0 10 10"><path d="M1.500 1.500l7 7M8.500 1.500l-7 7" stroke="#6e7072" stroke-width="1.200"/></svg>
<div style="left:1863px;top:52px;width:1px;height:25px;background:#4b4b4b;"></div>
<svg style="left:1867px;top:60px;" width="8" height="6" viewBox="0 0 8 6"><path d="M0 1h7l-3.500 4z" fill="#8a8c8e"/></svg>
<svg style="left:1875px;top:58px;" width="10" height="10" viewBox="0 0 10 10"><path d="M0 1.500h9M0 4.500h9M0 7.500h9" stroke="#8a8c8e" stroke-width="1.200"/></svg>
<span style="left:1884px;top:56.53px;color:#7d93ab;font-size:10px;">4</span>
<div style="left:648px;top:77px;width:1247px;height:502px;background:#2b2b2b;"></div>
<div style="left:648px;top:77px;width:106px;height:502px;background:#313335;"></div>
<div style="left:754px;top:77px;width:1px;height:502px;background:#555555;"></div>
<div style="left:755px;top:354px;width:1140px;height:22px;background:#2d6099;"></div>
<div style="left:755px;top:442px;width:1140px;height:22px;background:#3a2323;"></div>
<div style="left:1602px;top:77px;width:1px;height:502px;background:#484848;"></div>
<div style="left:1602px;top:354px;width:1px;height:22px;background:#2a5685;"></div>
<div style="left:820px;top:77px;width:1px;height:13px;background:#3a3a3a;"></div>
<div style="left:792px;top:266px;width:1px;height:313px;background:#3a3a3a;"></div>
<div style="left:820px;top:310px;width:1px;height:269px;background:#3a3a3a;"></div>
<div style="left:792px;top:354px;width:1px;height:22px;background:#3f6ea5;"></div>
<div style="left:820px;top:354px;width:1px;height:22px;background:#3f6ea5;"></div>
<div style="left:792px;top:442px;width:1px;height:22px;background:#452d2d;"></div>
<div style="left:820px;top:442px;width:1px;height:22px;background:#452d2d;"></div>
<div style="left:762px;top:354px;width:2px;height:22px;background:#d5cfc5;"></div>
<div class="code" style="left:648px;top:77px;width:1247px;height:501px;overflow:hidden;background:none">
<span class="a ln" style="left:6px;top:-6px">438</span>
<span class="a cl" style="left:113.600px;top:-6px"><b style="color:#a9b7c6">        }</b></span>
<span class="a ln" style="left:6px;top:16px">439</span>
<span class="a cl" style="left:113.600px;top:16px"><b style="color:#a9b7c6">    }</b></span>
<span class="a ln" style="left:6px;top:38px">440</span>
<span class="a ln" style="left:6px;top:60px">441</span>
<span class="a cl" style="left:113.600px;top:60px"><i style="color:#629755;font-style:italic">    /**</i></span>
<span class="a ln" style="left:6px;top:82px">442</span>
<span class="a cl" style="left:113.600px;top:82px"><i style="color:#629755;font-style:italic">     * This method generates an instance of the translet class that is</i></span>
<span class="a ln" style="left:6px;top:104px">443</span>
<span class="a cl" style="left:113.600px;top:104px"><i style="color:#629755;font-style:italic">     * wrapped inside this Template. The translet instance will later</i></span>
<span class="a ln" style="left:6px;top:126px">444</span>
<span class="a cl" style="left:113.600px;top:126px"><i style="color:#629755;font-style:italic">     * be wrapped inside a Transformer object.</i></span>
<span class="a ln" style="left:6px;top:148px">445</span>
<span class="a cl" style="left:113.600px;top:148px"><i style="color:#629755;font-style:italic">     */</i></span>
<span class="a ln" style="left:6px;top:170px">446</span>
<span class="a cl" style="left:113.600px;top:170px"><b style="color:#cc7832">    private </b><b style="color:#a9b7c6">Translet </b><b style="color:#ffc66d">getTransletInstance</b><b style="color:#a9b7c6">()</b></span>
<span class="a ln" style="left:6px;top:192px">447</span>
<span class="a cl" style="left:113.600px;top:192px"><b style="color:#cc7832">        throws </b><b style="color:#a9b7c6">TransformerConfigurationException {</b></span>
<span class="a ln" style="left:6px;top:214px">448</span>
<span class="a cl" style="left:113.600px;top:214px"><b style="color:#cc7832">        try </b><b style="color:#a9b7c6">{</b></span>
<span class="a ln" style="left:6px;top:236px">449</span>
<span class="a cl" style="left:113.600px;top:236px"><b style="color:#cc7832">            if </b><b style="color:#a9b7c6">(</b><b style="color:#9876aa">_name</b><b style="color:#a9b7c6"> == </b><b style="color:#cc7832">null</b><b style="color:#a9b7c6">) </b><b style="color:#cc7832">return null;</b><i style="color:#5f8a6a;font-style:italic">  _name: "a.b"</i></span>
<span class="a ln" style="left:6px;top:258px">450</span>
<span class="a ln" style="left:6px;top:280px">451</span>
<span class="a cl" style="left:113.600px;top:280px"><b style="color:#cc7832">            if </b><b style="color:#a9b7c6">(</b><b style="color:#b394c4">_class</b><b style="color:#a9b7c6"> == </b><b style="color:#cc7832">null</b><b style="color:#a9b7c6">) defineTransletClasses()</b><b style="color:#cc7832">;</b><i style="color:#e6d84f;font-style:italic">  _class: null</i></span>
<span class="a ln" style="left:6px;top:302px">452</span>
<span class="a ln" style="left:6px;top:324px">453</span>
<span class="a cl" style="left:113.600px;top:324px"><b style="color:#808080">            // The translet needs to keep a reference to all its auxiliary</b></span>
<span class="a ln" style="left:6px;top:346px">454</span>
<span class="a cl" style="left:113.600px;top:346px"><b style="color:#808080">            // class to prevent the GC from collecting them</b></span>
<span class="a ln" style="left:6px;top:368px">455</span>
<span class="a cl" style="left:113.600px;top:368px"><b style="color:#a9b7c6">            AbstractTranslet translet = (AbstractTranslet) </b><b style="color:#9876aa">_class</b><b style="color:#a9b7c6">[</b><b style="color:#9876aa">_transletIndex</b><b style="color:#a9b7c6">].newInstance()</b><b style="color:#cc7832">;</b></span>
<span class="a ln" style="left:6px;top:390px">456</span>
<span class="a cl" style="left:113.600px;top:390px"><b style="color:#a9b7c6">            translet.postInitialization()</b><b style="color:#cc7832">;</b></span>
<span class="a ln" style="left:6px;top:412px">457</span>
<span class="a cl" style="left:113.600px;top:412px"><b style="color:#a9b7c6">            translet.setTemplates(</b><b style="color:#cc7832">this</b><b style="color:#a9b7c6">)</b><b style="color:#cc7832">;</b></span>
<span class="a ln" style="left:6px;top:434px">458</span>
<span class="a cl" style="left:113.600px;top:434px"><b style="color:#a9b7c6">            translet.setServicesMechnism(</b><b style="color:#9876aa">_useServicesMechanism</b><b style="color:#a9b7c6">)</b><b style="color:#cc7832">;</b></span>
<span class="a ln" style="left:6px;top:456px">459</span>
<span class="a cl" style="left:113.600px;top:456px"><b style="color:#a9b7c6">            translet.setAllowedProtocols(</b><b style="color:#9876aa">_accessExternalStylesheet</b><b style="color:#a9b7c6">)</b><b style="color:#cc7832">;</b></span>
<span class="a ln" style="left:6px;top:478px">460</span>
<span class="a cl" style="left:113.600px;top:478px"><b style="color:#cc7832">            if </b><b style="color:#a9b7c6">(</b><b style="color:#9876aa">_auxClasses</b><b style="color:#a9b7c6"> != </b><b style="color:#cc7832">null</b><b style="color:#a9b7c6">) {</b></span>
</div>
<svg style="left:749px;top:94.5px;" width="11" height="17" viewBox="0 0 11 17"><path d="M.5 13.0h10v-9l-5-4.500-5 4.500z" fill="#2b2b2b" stroke="#5e5e5e"/><path d="M2.500 8h6" stroke="#5e5e5e"/></svg>
<svg style="left:749px;top:226.5px;" width="11" height="17" viewBox="0 0 11 17"><path d="M.5 13.0h10v-9l-5-4.500-5 4.500z" fill="#2b2b2b" stroke="#5e5e5e"/><path d="M2.500 8h6" stroke="#5e5e5e"/></svg>
<svg style="left:749px;top:424.5px;" width="11" height="17" viewBox="0 0 11 17"><path d="M.5 13.0h10v-9l-5-4.500-5 4.500z" fill="#2b2b2b" stroke="#5e5e5e"/><path d="M2.500 8h6" stroke="#5e5e5e"/></svg>
<svg style="left:749px;top:138.5px;" width="11" height="17" viewBox="0 0 11 17"><path d="M.5 2.0h10v8.500l-5 5-5-5z" fill="#2b2b2b" stroke="#5e5e5e"/><path d="M2.500 8h6" stroke="#5e5e5e"/></svg>
<svg style="left:749px;top:270.5px;" width="11" height="17" viewBox="0 0 11 17"><path d="M.5 2.0h10v8.500l-5 5-5-5z" fill="#2b2b2b" stroke="#5e5e5e"/><path d="M2.500 8h6" stroke="#5e5e5e"/></svg>
<svg style="left:749px;top:402.5px;" width="11" height="17" viewBox="0 0 11 17"><path d="M.5 2.0h10v8.500l-5 5-5-5z" fill="#2b2b2b" stroke="#5e5e5e"/><path d="M2.500 8h6" stroke="#5e5e5e"/></svg>
<svg style="left:722px;top:355px;" width="20" height="20" viewBox="0 0 20 20"><circle cx="8.300" cy="9.700" r="7.400" fill="#d0554f"/><path d="M6.800 4.500l3 3 5.800-6" fill="none" stroke="#313335" stroke-width="3.400"/><path d="M6.800 4.500l3 3 5.800-6" fill="none" stroke="#dcdcdc" stroke-width="1.700"/></svg>
<svg style="left:722px;top:443px;" width="20" height="20" viewBox="0 0 20 20"><circle cx="8.300" cy="9.700" r="7.400" fill="#d0554f"/><path d="M6.800 4.500l3 3 5.800-6" fill="none" stroke="#313335" stroke-width="3.400"/><path d="M6.800 4.500l3 3 5.800-6" fill="none" stroke="#dcdcdc" stroke-width="1.700"/></svg>
<div style="left:1886px;top:480px;width:8px;height:35px;background:#a6a6a6;"></div>
<div style="left:1881px;top:470px;width:13px;height:2px;background:#8f5236;"></div>
<div style="left:1881px;top:523px;width:13px;height:2px;background:#8f5236;"></div>
<div style="left:1881px;top:557px;width:13px;height:2px;background:#8f5236;"></div>
<div style="left:1881px;top:506px;width:5px;height:1px;background:#a8933a;"></div>
<div style="left:1881px;top:509px;width:5px;height:1px;background:#a8933a;"></div>
<svg style="left:1880px;top:79px;" width="14" height="12" viewBox="0 0 14 12"><path d="M1.500 5.500l4 4 7-8" fill="none" stroke="#499c54" stroke-width="2.400"/></svg>
<div style="left:648px;top:579px;width:1247px;height:25px;background:#313335;"></div>
<span style="left:764px;top:583.50px;color:#bbbbbb;font-size:13px;letter-spacing:.15px">TemplatesImpl</span>
<span style="left:860px;top:583.30px;color:#808080;font-size:15px;">›</span>
<div style="left:848px;top:574px;width:1px;height:5px;background:#3a3a3a;"></div>
<span style="left:874px;top:583.50px;color:#bbbbbb;font-size:13px;">getTransletInstance()</span>
<div style="left:789px;top:38px;width:149px;height:39px;border:3px solid #fa1c10;border-radius:3px;background:none"></div>
<div style="left:906px;top:238px;width:155px;height:27px;border:3px solid #fa1c10;border-radius:3px;background:none"></div>
<div style="left:981px;top:349px;width:170px;height:27px;border:3px solid #fa1c10;border-radius:3px;background:none"></div>
<div style="left:1169px;top:439px;width:266px;height:24px;border:3px solid #fa1c10;border-radius:3px;background:none"></div>
<div style="left:19px;top:603px;width:629px;height:1px;background:#2b2b2b;"></div>
<div style="left:19px;top:604px;width:932px;height:25px;background:#3c3f41;"></div>
<span style="left:27px;top:608.50px;color:#bbbbbb;font-size:13px;">Debug:</span>
<div style="left:76px;top:604px;width:104px;height:25px;background:#333638;"></div>
<svg style="left:88px;top:608px;" width="18" height="16" viewBox="0 0 18 16"><rect x=".5" y=".5" width="10" height="8" fill="none" stroke="#6e7275"/><rect x="3.500" y="4.500" width="11" height="9" fill="#333638" stroke="#8a9197"/><rect x="4" y="5" width="10" height="2" fill="#8a9197"/><rect x="5" y="8" width="8" height="4" fill="#5aa7e0"/><circle cx="14.300" cy="13.200" r="2" fill="#21e51c"/></svg>
<span style="left:107px;top:608.50px;color:#bbbbbb;font-size:13px;">vulApp1</span>
<svg style="left:159px;top:611px;" width="10" height="10" viewBox="0 0 10 10"><path d="M1.500 1.500l7 7M8.500 1.500l-7 7" stroke="#7a7c7e" stroke-width="1.300"/></svg>
<svg style="left:904px;top:608px;" width="16" height="16" viewBox="0 0 16 16"><path d="M8 1.200l1.200.1.500 1.800 1.300.6 1.700-.9 1.600 1.600-.9 1.700.6 1.300 1.800.5v2.300l-1.800.5-.6 1.300.9 1.700-1.600 1.600-1.700-.9-1.300.6-.5 1.800H6.800l-.5-1.800-1.300-.6-1.700.9-1.600-1.600.9-1.700-.6-1.300-1.800-.5V6.900l1.800-.5.6-1.300-.9-1.700 1.600-1.600 1.700.9 1.300-.6.5-1.800z" fill="#afb1b3" transform="translate(8 8) scale(.88) translate(-8 -8.600)"/><circle cx="8" cy="8" r="2.200" fill="#3c3f41"/></svg>
<div style="left:932px;top:615px;width:12px;height:2px;background:#afb1b3;"></div>
<div style="left:19px;top:629px;width:932px;height:1px;background:#323232;"></div>
<div style="left:48px;top:630px;width:150px;height:27px;background:#35383a;"></div>
<div style="left:110px;top:630px;width:1px;height:27px;background:#2d2f30;"></div>
<div style="left:198px;top:630px;width:93px;height:27px;background:#4b5052;"></div>
<span style="left:54px;top:633.91px;color:#bbbbbb;font-size:11.8px;">Debugger</span>
<svg style="left:53px;top:643px;" width="9" height="9" viewBox="0 0 9 9"><circle cx="4.500" cy="4.500" r="4" fill="#e2a63c"/><path d="M4.500 1.500v4.500M2.500 4.300l2 2 2-2" fill="none" stroke="#3c3f41" stroke-width="1.200"/></svg>
<svg style="left:117px;top:634px;" width="18" height="18" viewBox="0 0 18 18"><rect x=".8" y="1" width="13.500" height="12.500" fill="#35383a" stroke="#8a9197" stroke-width="1.400"/><rect x=".8" y="1" width="13.500" height="2.500" fill="#4a8fc2"/><path d="M3.500 6.500h7M3.500 8.700h5M3.500 10.900h6" stroke="#8a9197" stroke-width="1.100"/><circle cx="12.500" cy="12.800" r="4.300" fill="#e2a63c"/><path d="M12.500 9.800v4.500M10.500 12.600l2 2 2-2" fill="none" stroke="#3c3f41" stroke-width="1.200"/></svg>
<span style="left:135px;top:633.98px;color:#bbbbbb;font-size:11.6px;">Console</span>
<svg style="left:183px;top:639px;" width="12" height="8" viewBox="0 0 12 8"><path d="M0 4h6M4 1.500l2.500 2.500-2.500 2.500" fill="none" stroke="#8a8c8e" stroke-width="1.100"/><rect x="8.500" y="1" width="2.500" height="2.500" fill="#8a8c8e"/></svg>
<svg style="left:205px;top:636px;" width="14" height="14" viewBox="0 0 14 14"><rect x="0" y="0" width="13" height="3.300" fill="#cfa050"/><rect x="0" y="4.800" width="13" height="3.300" fill="#cfa050"/><rect x="0" y="9.600" width="13" height="3.300" fill="#cfa050"/></svg>
<span style="left:223px;top:634.02px;color:#bbbbbb;font-size:11.5px;">Variables</span>
<svg style="left:277px;top:639px;" width="12" height="8" viewBox="0 0 12 8"><path d="M0 4h6M4 1.500l2.500 2.500-2.500 2.500" fill="none" stroke="#8a8c8e" stroke-width="1.100"/><rect x="8.500" y="1" width="2.500" height="2.500" fill="#8a8c8e"/></svg>
<svg style="left:299px;top:636px;" width="13" height="14" viewBox="0 0 13 14"><rect x="0" y="1" width="12.500" height="2" fill="#d0d2d4"/><rect x="0" y="5" width="12.500" height="3.500" fill="#3a9bdc"/><rect x="0" y="10.500" width="12.500" height="2" fill="#d0d2d4"/></svg>
<div style="left:321px;top:633px;width:1px;height:20px;background:#515355;"></div>
<svg style="left:331px;top:636px;" width="14" height="14" viewBox="0 0 14 14"><path d="M1 7l4.500-5 6 6" fill="none" stroke="#3a9bdc" stroke-width="1.800"/><path d="M13 3.500v6h-6z" fill="#3a9bdc"/><rect x="1" y="11.500" width="12" height="1.800" fill="#c4c7c9"/></svg>
<svg style="left:357px;top:636px;" width="14" height="14" viewBox="0 0 14 14"><path d="M7 0v7" stroke="#3a9bdc" stroke-width="2"/><path d="M2.500 5h9l-4.500 5z" fill="#3a9bdc"/><rect x="1" y="11.500" width="12" height="1.800" fill="#c4c7c9"/></svg>
<svg style="left:383px;top:636px;" width="14" height="14" viewBox="0 0 14 14"><path d="M7 0v7" stroke="#db5c5c" stroke-width="2"/><path d="M2.500 5h9l-4.500 5z" fill="#db5c5c"/><rect x="1" y="11.500" width="12" height="1.800" fill="#c4c7c9"/></svg>
<svg style="left:409px;top:636px;" width="14" height="14" viewBox="0 0 14 14"><path d="M7 10v-6" stroke="#3a9bdc" stroke-width="2"/><path d="M2.500 5.500h9l-4.500-5z" fill="#3a9bdc"/><rect x="1" y="11.500" width="12" height="1.800" fill="#c4c7c9"/></svg>
<svg style="left:434px;top:635px;" width="16" height="16" viewBox="0 0 16 16"><path d="M1 1l5.500 5.500M6.500 1l-5.500 5.500" stroke="#db5c5c" stroke-width="1.800"/><path d="M8 5h5.500v8.500h-8.500v-4.500" fill="none" stroke="#c4c7c9" stroke-width="1.600"/></svg>
<svg style="left:460px;top:635px;" width="18" height="17" viewBox="0 0 18 17"><path d="M1.500 1.500l6 6" stroke="#3a9bdc" stroke-width="2"/><path d="M9 3v6h-6z" fill="#3a9bdc"/><path d="M10.500 7.500h4M10.500 15.500h4M12.500 7.500v8" stroke="#c4c7c9" stroke-width="1"/></svg>
<div style="left:484px;top:633px;width:1px;height:20px;background:#515355;"></div>
<svg style="left:494px;top:637px;" width="13" height="13" viewBox="0 0 13 13"><rect x=".8" y=".8" width="11.400" height="11.400" fill="none" stroke="#c4c7c9" stroke-width="1.600"/><rect x="1" y="1" width="11" height="3" fill="#c4c7c9"/><path d="M4.700 4v8M8.300 4v8M1 8h11" stroke="#c4c7c9" stroke-width="1.100"/></svg>
<svg style="left:521px;top:638px;" width="13" height="11" viewBox="0 0 13 11"><path d="M0 1.500h5M7 1.500h6M0 5.500h4l3-4M4 5.500l3 0h6M0 9.500h5M7 9.500h6" fill="none" stroke="#5e6163" stroke-width="1.400"/></svg>
<svg style="left:930px;top:635px;" width="16" height="16" viewBox="0 0 16 16"><path d="M2 12a6.200 6.200 0 1 1 11.500-2" fill="none" stroke="#c4c7c9" stroke-width="1.700"/><path d="M7.500 9.500l4-5" stroke="#c4c7c9" stroke-width="1.600"/><path d="M15 8v7h-7z" fill="#f2c037"/></svg>
<div style="left:48px;top:657px;width:903px;height:3px;background:#4c5052;"></div>
<div style="left:47px;top:630px;width:1px;height:343px;background:#323232;"></div>
<svg style="left:24px;top:635px;" width="17" height="17" viewBox="0 0 17 17"><path d="M12 9.500a5 5 0 1 1-4.500-5" fill="none" stroke="#499c54" stroke-width="2.200"/><path d="M7 .5l5.500 4-5.500 4z" fill="#499c54"/><rect x="9.500" y="10" width="6" height="6" fill="#c4c7c9"/></svg>
<div style="left:22px;top:660px;width:21px;height:1px;background:#515355;"></div>
<svg style="left:26px;top:671px;" width="14" height="12" viewBox="0 0 14 12"><rect x="0" y="0" width="3" height="12" fill="#499c54"/><path d="M5 0l8.500 6-8.500 6z" fill="#499c54"/></svg>
<svg style="left:28px;top:698px;" width="10" height="11" viewBox="0 0 10 11"><rect x="0" y="0" width="3.500" height="11" fill="#5e6163"/><rect x="6" y="0" width="3.500" height="11" fill="#5e6163"/></svg>
<div style="left:28px;top:725px;width:10px;height:10px;background:#c75450;"></div>
<div style="left:22px;top:746px;width:21px;height:1px;background:#515355;"></div>
<svg style="left:25px;top:754px;" width="16" height="16" viewBox="0 0 16 16"><circle cx="10" cy="5.500" r="4.500" fill="#db5860"/><circle cx="6" cy="10.500" r="4.800" fill="#db5860" stroke="#3c3f41" stroke-width="1"/></svg>
<svg style="left:25px;top:780px;" width="16" height="16" viewBox="0 0 16 16"><circle cx="8" cy="8" r="5.300" fill="#db5860"/><path d="M1.500 14.500l13-13" stroke="#3c3f41" stroke-width="3.600"/><path d="M1.500 14.500l13-13" stroke="#c4c7c9" stroke-width="1.300"/></svg>
<div style="left:22px;top:805px;width:21px;height:1px;background:#515355;"></div>
<svg style="left:25px;top:815px;" width="16" height="14" viewBox="0 0 16 14"><path d="M0 3h4l1.500-2.500h5l1.500 2.500h4v10.500h-16z" fill="#c4c7c9"/><circle cx="8" cy="8" r="3.300" fill="#3c3f41"/><circle cx="8" cy="8" r="1.600" fill="#c4c7c9"/></svg>
<div style="left:22px;top:839px;width:21px;height:1px;background:#515355;"></div>
<svg style="left:26px;top:849px;" width="14" height="12" viewBox="0 0 14 12"><rect x="0" y="0" width="6" height="5" fill="#c4c7c9"/><rect x="7.500" y="0" width="6" height="5" fill="#c4c7c9"/><rect x="0" y="6.500" width="13.500" height="5" fill="#c4c7c9"/></svg>
<svg style="left:25px;top:873px;" width="16" height="16" viewBox="0 0 16 16"><path d="M8 1.200l1.200.1.500 1.800 1.300.6 1.700-.9 1.600 1.600-.9 1.700.6 1.300 1.800.5v2.300l-1.800.5-.6 1.300.9 1.700-1.600 1.600-1.700-.9-1.300.6-.5 1.800H6.800l-.5-1.800-1.300-.6-1.700.9-1.600-1.600.9-1.700-.6-1.300-1.800-.5V6.900l1.800-.5.6-1.300-.9-1.700 1.600-1.600 1.700.9 1.300-.6.5-1.800z" fill="#c4c7c9" transform="translate(8 8) scale(.88) translate(-8 -8.600)"/><circle cx="8" cy="8" r="2.200" fill="#3c3f41"/></svg>
<svg style="left:38px;top:886px;" width="6" height="4" viewBox="0 0 6 4"><path d="M0 0h5l-2.500 3z" fill="#c4c7c9"/></svg>
<div style="left:22px;top:897px;width:21px;height:1px;background:#515355;"></div>
<svg style="left:25px;top:905px;" width="16" height="16" viewBox="0 0 16 16"><path d="M9 1l6 6-2 .5-3 3-.5 3.500-6-6 3.500-.5 3-3z" fill="#c4c7c9"/><path d="M1 15l4.500-4.500" stroke="#c4c7c9" stroke-width="1.500"/></svg>
<div style="left:72px;top:660px;width:1px;height:313px;background:#323232;"></div>
<svg style="left:54px;top:668px;" width="12" height="12" viewBox="0 0 12 12"><path d="M6 .5v11M.5 6h11" stroke="#c4c7c9" stroke-width="1.800"/></svg>
<div style="left:55px;top:699px;width:10px;height:2px;background:#5e6163;"></div>
<svg style="left:54px;top:722px;" width="12" height="8" viewBox="0 0 12 8"><path d="M0 7l6-6.500 6 6.500z" fill="#55585a"/></svg>
<svg style="left:54px;top:748px;" width="12" height="8" viewBox="0 0 12 8"><path d="M0 .5l6 6.500 6-6.500z" fill="#55585a"/></svg>
<svg style="left:53px;top:771px;" width="14" height="14" viewBox="0 0 14 14"><rect x=".7" y=".7" width="8" height="9" fill="none" stroke="#5e6163" stroke-width="1.400"/><rect x="4" y="4" width="9" height="9.500" fill="#5e6163"/><path d="M6 7h5M6 9h5M6 11h5" stroke="#3c3f41" stroke-width="1"/></svg>
<div style="left:49px;top:793px;width:21px;height:21px;border:1px solid #6b6e70;border-radius:3px;background:#4a4d4f"></div>
<svg style="left:53px;top:800px;" width="15" height="8" viewBox="0 0 15 8"><circle cx="3.500" cy="4" r="2.700" fill="none" stroke="#d0d2d4" stroke-width="1.500"/><circle cx="11" cy="4" r="2.700" fill="none" stroke="#d0d2d4" stroke-width="1.500"/><path d="M6 3.300h2.500" stroke="#d0d2d4" stroke-width="1.300"/></svg>
<svg style="left:94px;top:668px;" width="15" height="8" viewBox="0 0 15 8"><circle cx="3.500" cy="4" r="2.700" fill="none" stroke="#c4c7c9" stroke-width="1.500"/><circle cx="11" cy="4" r="2.700" fill="none" stroke="#c4c7c9" stroke-width="1.500"/><path d="M6 3.300h2.500" stroke="#c4c7c9" stroke-width="1.300"/></svg>
<span style="left:112px;top:663.50px;color:#bbbbbb;font-size:13px;"><b style="font-weight:normal;color:#e5726c">_tfactory.getExternalExtensionsMap()</b><b style="font-weight:normal;color:#bbbbbb"> = null</b></span>
<svg style="left:77px;top:688px;" width="10" height="11" viewBox="0 0 10 11"><path d="M1 .5l8.500 5-8.500 5z" fill="#adadad"/></svg>
<svg style="left:94px;top:689px;" width="15" height="8" viewBox="0 0 15 8"><circle cx="3.500" cy="4" r="2.700" fill="none" stroke="#c4c7c9" stroke-width="1.500"/><circle cx="11" cy="4" r="2.700" fill="none" stroke="#c4c7c9" stroke-width="1.500"/><path d="M6 3.300h2.500" stroke="#c4c7c9" stroke-width="1.300"/></svg>
<span style="left:112px;top:684.50px;color:#bbbbbb;font-size:13px;"><b style="font-weight:normal;color:#e5726c">ObjectFactory.findClassLoader()</b><b style="font-weight:normal;color:#bbbbbb"> = </b><b style="font-weight:normal;color:#6f7173">{Launcher$AppClassLoader@754}</b></span>
<svg style="left:77px;top:709px;" width="10" height="11" viewBox="0 0 10 11"><path d="M1 .5l8.500 5-8.500 5z" fill="#adadad"/></svg>
<svg style="left:95px;top:708px;" width="13" height="13" viewBox="0 0 13 13"><rect x="0" y="0" width="12.500" height="3.200" fill="#d9a343"/><rect x="0" y="4.600" width="12.500" height="3.200" fill="#d9a343"/><rect x="0" y="9.200" width="12.500" height="3.200" fill="#d9a343"/></svg>
<span style="left:112px;top:705.50px;color:#bbbbbb;font-size:13px;"><b style="font-weight:normal;color:#e5726c">this</b><b style="font-weight:normal;color:#bbbbbb"> = </b><b style="font-weight:normal;color:#6f7173">{TemplatesImpl@710}</b></span>
<svg style="left:77px;top:730px;" width="10" height="11" viewBox="0 0 10 11"><path d="M1 .5l8.500 5-8.500 5z" fill="#adadad"/></svg>
<svg style="left:94px;top:731px;" width="15" height="8" viewBox="0 0 15 8"><circle cx="3.500" cy="4" r="2.700" fill="none" stroke="#c4c7c9" stroke-width="1.500"/><circle cx="11" cy="4" r="2.700" fill="none" stroke="#c4c7c9" stroke-width="1.500"/><path d="M6 3.300h2.500" stroke="#c4c7c9" stroke-width="1.300"/></svg>
<span style="left:112px;top:726.50px;color:#bbbbbb;font-size:13px;"><b style="font-weight:normal;color:#e5726c">_name</b><b style="font-weight:normal;color:#bbbbbb"> = </b><b style="font-weight:normal;color:#6a8759">"a.b"</b></span>
<svg style="left:94px;top:752px;" width="15" height="8" viewBox="0 0 15 8"><circle cx="3.500" cy="4" r="2.700" fill="none" stroke="#c4c7c9" stroke-width="1.500"/><circle cx="11" cy="4" r="2.700" fill="none" stroke="#c4c7c9" stroke-width="1.500"/><path d="M6 3.300h2.500" stroke="#c4c7c9" stroke-width="1.300"/></svg>
<span style="left:112px;top:747.50px;color:#bbbbbb;font-size:13px;"><b style="font-weight:normal;color:#e5726c">_class[_transletIndex]</b><b style="font-weight:normal;color:#bbbbbb"> = </b><b style="font-weight:normal;color:#ff5a5a">Array reference expected</b></span>
<svg style="left:94px;top:773px;" width="15" height="8" viewBox="0 0 15 8"><circle cx="3.500" cy="4" r="2.700" fill="none" stroke="#c4c7c9" stroke-width="1.500"/><circle cx="11" cy="4" r="2.700" fill="none" stroke="#c4c7c9" stroke-width="1.500"/><path d="M6 3.300h2.500" stroke="#c4c7c9" stroke-width="1.300"/></svg>
<span style="left:112px;top:768.50px;color:#bbbbbb;font-size:13px;"><b style="font-weight:normal;color:#e5726c">_class</b><b style="font-weight:normal;color:#bbbbbb"> = null</b></span>
<svg style="left:94px;top:794px;" width="15" height="8" viewBox="0 0 15 8"><circle cx="3.500" cy="4" r="2.700" fill="none" stroke="#c4c7c9" stroke-width="1.500"/><circle cx="11" cy="4" r="2.700" fill="none" stroke="#c4c7c9" stroke-width="1.500"/><path d="M6 3.300h2.500" stroke="#c4c7c9" stroke-width="1.300"/></svg>
<span style="left:112px;top:789.50px;color:#bbbbbb;font-size:13px;"><b style="font-weight:normal;color:#e5726c">_transletIndex</b><b style="font-weight:normal;color:#bbbbbb"> = -1</b></span>
<div style="left:951px;top:604px;width:1px;height:369px;background:#323232;"></div>
<div style="left:952px;top:604px;width:943px;height:25px;background:#3c3f41;"></div>
<span style="left:960px;top:608.50px;color:#bbbbbb;font-size:13px;">Event Log</span>
<svg style="left:1847px;top:608px;" width="16" height="16" viewBox="0 0 16 16"><path d="M8 1.200l1.200.1.500 1.800 1.300.6 1.700-.9 1.600 1.600-.9 1.700.6 1.300 1.800.5v2.300l-1.800.5-.6 1.300.9 1.700-1.600 1.600-1.700-.9-1.300.6-.5 1.800H6.800l-.5-1.800-1.300-.6-1.700.9-1.600-1.600.9-1.700-.6-1.300-1.800-.5V6.900l1.800-.5.6-1.300-.9-1.700 1.600-1.600 1.700.9 1.300-.6.5-1.800z" fill="#afb1b3" transform="translate(8 8) scale(.88) translate(-8 -8.600)"/><circle cx="8" cy="8" r="2.200" fill="#3c3f41"/></svg>
<div style="left:1875px;top:615px;width:12px;height:2px;background:#afb1b3;"></div>
<div style="left:952px;top:629px;width:943px;height:1px;background:#323232;"></div>
<div style="left:952px;top:630px;width:29px;height:343px;background:#3c3f41;"></div>
<div style="left:981px;top:630px;width:914px;height:343px;background:#2b2b2b;"></div>
<div style="left:981px;top:630px;width:1px;height:343px;background:#323232;"></div>
<svg style="left:960px;top:637px;" width="14" height="14" viewBox="0 0 14 14"><rect x=".8" y="2.800" width="10" height="10" fill="none" stroke="#5e6163" stroke-width="1.500"/><path d="M3 6.500l3 3 6.500-8" fill="none" stroke="#5e6163" stroke-width="1.800"/></svg>
<svg style="left:961px;top:663px;" width="12" height="15" viewBox="0 0 12 15"><rect x="3.500" y="0" width="5" height="2" fill="#c4c7c9"/><rect x="0" y="2" width="12" height="2.200" fill="#c4c7c9"/><path d="M1 5.500h10v8.500h-10z" fill="#c4c7c9"/></svg>
<div style="left:957px;top:686px;width:20px;height:1px;background:#515355;"></div>
<svg style="left:959px;top:696px;" width="16" height="16" viewBox="0 0 16 16"><path d="M1.500 14.500l7.500-7.500" stroke="#c4c7c9" stroke-width="2.800"/><path d="M8 5a4 4 0 0 1 5.500-3.700l-2.500 2.500 1.200 2.200 2.300 0 1.200-1.500a4 4 0 0 1-5.200 4.200z" fill="#c4c7c9"/></svg>
<span style="left:986px;top:630.50px;color:#bbbbbb;font-size:13px;">2018/11/19</span>
<span style="left:986px;top:647.50px;color:#bbbbbb;font-size:13px;">22:10</span>
<span style="left:1018px;top:647.50px;color:#287bde;font-size:13px;"><u style="text-underline-offset:1px;letter-spacing:.05px">Compilation completed successfully with 3 warnings in 5 s 211 ms</u></span>
<span style="left:986px;top:681.50px;color:#bbbbbb;font-size:13px;letter-spacing:.14px">22:15All files are up-to-date</span>
<span style="left:986px;top:715.50px;color:#bbbbbb;font-size:13px;letter-spacing:.14px">22:16All files are up-to-date</span>
<span style="left:986px;top:749.50px;color:#bbbbbb;font-size:13px;letter-spacing:.14px">22:24All files are up-to-date</span>
<span style="left:986px;top:783.50px;color:#bbbbbb;font-size:13px;letter-spacing:.14px">22:24All files are up-to-date</span>
<span style="left:986px;top:817.50px;color:#bbbbbb;font-size:13px;letter-spacing:.14px">22:25All files are up-to-date</span>
<div style="left:0px;top:973px;width:1917px;height:1px;background:#323232;"></div>
<div style="left:0px;top:974px;width:1917px;height:21px;background:#3c3f41;"></div>
<div style="left:16px;top:974px;width:85px;height:21px;background:#2d2f30;"></div>
<svg style="left:27px;top:977px;" width="15" height="15" viewBox="0 0 15 15"><ellipse cx="6.500" cy="8" rx="3.600" ry="4.600" fill="#c4c7c9"/><path d="M4 3a2.500 2.500 0 0 1 5 0z" fill="#c4c7c9"/><path d="M.5 4.500l3 2M12.500 4.500l-3 2M0 8.500h3.500M13 8.500h-3.500M.5 12.500l3-2M12.500 12.500l-3-2" stroke="#c4c7c9" stroke-width="1.200"/><circle cx="11.500" cy="12.500" r="2" fill="#21e51c"/></svg>
<span style="left:44px;top:977.95px;color:#ffffff;font-size:11.7px;"><u>5</u>: Debug</span>
<svg style="left:114px;top:979px;" width="11" height="10" viewBox="0 0 11 10"><path d="M0 1h2M0 4.500h2M0 8h2" stroke="#afb1b3" stroke-width="1.800"/><path d="M3.500 1h7M3.500 4.500h7M3.500 8h7" stroke="#afb1b3" stroke-width="1.800"/></svg>
<span style="left:129px;top:977.95px;color:#bbbbbb;font-size:11.7px;"><u>6</u>: TODO</span>
<svg style="left:194px;top:978px;" width="14" height="12" viewBox="0 0 14 12"><path d="M13 .5c1 6-2 10-7.500 10.500-2.500.2-4-.8-5-2 1-4.500 5-6.500 12.500-8.500z" fill="#afb1b3"/><path d="M1 10.500c3-2.500 6-4 9.500-5.500" stroke="#3c3f41" stroke-width=".9" fill="none"/></svg>
<span style="left:211px;top:977.95px;color:#bbbbbb;font-size:11.7px;">Spring</span>
<svg style="left:266px;top:978px;" width="12" height="11" viewBox="0 0 12 11"><rect x="0" y="0" width="11.500" height="10.500" fill="#afb1b3"/><path d="M2 2.500l2.500 2.500-2.500 2.500M5.500 8h4" fill="none" stroke="#3c3f41" stroke-width="1.300"/></svg>
<span style="left:282px;top:977.95px;color:#bbbbbb;font-size:11.7px;">Terminal</span>
<svg style="left:349px;top:979px;" width="13" height="10" viewBox="0 0 13 10"><rect x=".6" y=".6" width="11.500" height="8.500" fill="none" stroke="#afb1b3" stroke-width="1.300"/><path d="M5 3h-2v4h2M3 5h1.500M9.500 3h-2v4h2M7.500 5h1.500" fill="none" stroke="#afb1b3" stroke-width="1.100"/></svg>
<span style="left:366px;top:977.95px;color:#bbbbbb;font-size:11.7px;">Java Enterprise</span>
<div style="left:1808px;top:974px;width:88px;height:21px;background:#2d2f30;"></div>
<svg style="left:1818px;top:978px;" width="15" height="14" viewBox="0 0 15 14"><path d="M2 12.500v-6a5.500 5.500 0 1 1 5.500 5.500h-3z" fill="none" stroke="#c4c7c9" stroke-width="1.500" transform="translate(0 .3)"/></svg>
<span style="left:1835px;top:977.95px;color:#ffffff;font-size:11.7px;">Event Log</span>
<div style="left:0px;top:995px;width:1917px;height:1px;background:#323232;"></div>
<div style="left:0px;top:996px;width:1917px;height:15px;background:#3c3f41;"></div>
<svg style="left:6px;top:1000px;" width="14" height="12" viewBox="0 0 14 12"><rect x="2.500" y=".7" width="10" height="10" fill="#3c3f41" stroke="#afb1b3" stroke-width="1.300"/><path d="M.7 3v9" stroke="#afb1b3" stroke-width="1.300"/></svg>
<span style="left:28px;top:998.50px;color:#bbbbbb;font-size:13px;letter-spacing:.14px">All files are up-to-date (12 minutes ago)</span>
<span style="left:1755px;top:998.50px;color:#bbbbbb;font-size:13px;">451:1</span>
<span style="left:1800px;top:998.50px;color:#bbbbbb;font-size:13px;">LF</span>
<span style="left:1826px;top:998.50px;color:#bbbbbb;font-size:13px;">UTF-8</span>
<svg style="left:1874px;top:1000px;" width="10" height="12" viewBox="0 0 10 12"><rect x="0" y="5" width="9" height="7" fill="#afb1b3"/><path d="M1.800 5.500v-2a2.700 2.700 0 0 1 5.400 0v2" fill="none" stroke="#afb1b3" stroke-width="1.400"/></svg>
<svg style="left:1896px;top:1000px;" width="14" height="12" viewBox="0 0 14 12"><path d="M2 5.500a5 5 0 0 1 10 0z" fill="none" stroke="#8a8c8e" stroke-width="1.200"/><path d="M0 6.500h14" stroke="#8a8c8e" stroke-width="1.200"/><path d="M3.500 8v4M6 8v4M8.500 8v4M11 8v4" stroke="#8a8c8e" stroke-width="1" stroke-dasharray="1.200 1"/></svg>
<div style="left:1161.5px;top:338.60px;display:flex;align-items:flex-start;background:none;white-space:nowrap"><svg style="flex:none;overflow:visible;margin-left:0px" width="41.2" height="21.2" fill="#fa1c10"><text x="-0.3" y="18.6" font-size="21.2" letter-spacing="-0.6" fill="#fa1c10" font-family="'Liberation Sans','Noto Sans CJK SC',sans-serif">读取</text></svg><span style="flex:none;color:#fa1c10;font-size:21px;letter-spacing:.45px;line-height:24px;margin-left:-1.5px;margin-top:-3.3px">_bytecodes</span><svg style="flex:none;overflow:visible;margin-left:2.2px" width="61.8" height="21.2" fill="#fa1c10"><text x="-0.3" y="18.6" font-size="21.2" letter-spacing="-0.6" fill="#fa1c10" font-family="'Liberation Sans','Noto Sans CJK SC',sans-serif">中的类</text></svg></div>
<div style="left:1452.5px;top:441.80px;display:flex;align-items:flex-start;background:none;white-space:nowrap"><svg style="flex:none;overflow:visible;margin-left:0px" width="61.8" height="21.2" fill="#fa1c10"><text x="-0.3" y="18.6" font-size="21.2" letter-spacing="-0.6" fill="#fa1c10" font-family="'Liberation Sans','Noto Sans CJK SC',sans-serif">实例化</text></svg><span style="flex:none;color:#fa1c10;font-size:21px;letter-spacing:.45px;line-height:24px;margin-left:1.2px;margin-top:-3px">defineTransletClasses()</span><svg style="flex:none;overflow:visible;margin-left:-0.8px" width="82.4" height="21.2" fill="#fa1c10"><text x="-0.3" y="18.6" font-size="21.2" letter-spacing="-0.6" fill="#fa1c10" font-family="'Liberation Sans','Noto Sans CJK SC',sans-serif">获得的类</text></svg></div>
<span style="left:.8px;top:110px;transform-origin:0 0;transform:rotate(-90deg);font-size:11.700px;color:#ffffff"><u>1</u>: Project</span>
<svg style="left:3px;top:115px;" width="12" height="11" viewBox="0 0 12 11"><path d="M0 0h5l1.500 2h5v8.500h-11.500z" fill="#afb1b3"/></svg>
<span style="left:.8px;top:846px;transform-origin:0 0;transform:rotate(-90deg);font-size:11.700px;color:#bbbbbb"><u>7</u>: Structure</span>
<svg style="left:3px;top:851px;" width="11" height="11" viewBox="0 0 11 11"><rect x="0" y="6" width="4.500" height="4.500" fill="#afb1b3"/><rect x="6" y="6" width="4.500" height="4.500" fill="#afb1b3"/><rect x="6" y="0" width="4.500" height="4.500" fill="#afb1b3"/></svg>
<span style="left:.8px;top:945px;transform-origin:0 0;transform:rotate(-90deg);font-size:11.700px;color:#bbbbbb"><u>2</u>: Favorites</span>
<svg style="left:2px;top:949px;" width="13" height="13" viewBox="0 0 13 13"><path d="M6.500 0l1.900 4.300 4.600.5-3.500 3.100 1 4.600-4-2.400-4 2.400 1-4.600-3.500-3.100 4.600-.5z" fill="#afb1b3"/></svg>
<svg style="left:1900px;top:61px;" width="13" height="13" viewBox="0 0 13 13"><ellipse cx="6.500" cy="8.500" rx="2.600" ry="3.800" fill="#c4c7c9"/><circle cx="6.500" cy="3.300" r="2" fill="#c4c7c9"/><path d="M4.500 6l-4-3M8.500 6l4-3M4 8l-4 0M9 8l4 0M4.500 10l-3.500 3M8.500 10l3.500 3" stroke="#c4c7c9" stroke-width="1"/></svg>
<span style="left:1913px;top:79px;transform-origin:0 0;transform:rotate(90deg);font-size:11.700px;color:#bbbbbb">Ant Build</span>
<span style="left:1899px;top:145px;font-size:19px;font-style:italic;font-weight:bold;color:#c4c7c9;font-family:'Liberation Sans',sans-serif;line-height:20px">m</span>
<span style="left:1913px;top:167px;transform-origin:0 0;transform:rotate(90deg);font-size:11.700px;color:#bbbbbb">Maven Projects</span>
<svg style="left:1900px;top:270px;" width="13" height="14" viewBox="0 0 13 14"><ellipse cx="6.500" cy="3" rx="5.500" ry="2.500" fill="#c4c7c9"/><path d="M1 5.200c0 3 11 3 11 0v2c0 3-11 3-11 0zM1 8.700c0 3 11 3 11 0v2c0 3-11 3-11 0z" fill="#c4c7c9"/></svg>
<span style="left:1913px;top:288px;transform-origin:0 0;transform:rotate(90deg);font-size:11.700px;color:#bbbbbb">Database</span>
<svg style="left:1899px;top:359px;" width="15" height="14" viewBox="0 0 15 14"><path d="M1 3l3-2.500 6 6-3 3z" fill="#e2a63c"/><path d="M2.500 2l5 5" stroke="#3c3f41" stroke-width="1"/><path d="M6 9.500l3 3 5.500-6.500" fill="none" stroke="#21c51c" stroke-width="2"/></svg>
<span style="left:1913px;top:376px;transform-origin:0 0;transform:rotate(90deg);font-size:11.700px;color:#bbbbbb">Bean Validation</span>
<svg style="left:0;top:0;pointer-events:none" width="1928" height="1011"><defs><g id="wmt"><text x="-11.800" y="8.900" font-size="23.500" letter-spacing="1.300" font-family="'Liberation Sans','Noto Sans CJK SC',sans-serif">零组资料文库</text><path d="M-15.500 -4.0l-.5 -4.500M138.500 -6.0l.5 -4.500" stroke-width="1.600"/></g><pattern id="wmp" width="218.120" height="165.820" patternUnits="userSpaceOnUse" patternTransform="matrix(0.8670 -0.4984 0.5011 0.8654 0 0)"><g fill="#8cc882" stroke="#8cc882" stroke-width="0" fill-opacity=".14" stroke-opacity=".14"><use href="#wmt" x="-164.100" y="92.500"/><use href="#wmt" x="54.000" y="92.500"/><use href="#wmt" x="-55.000" y="9.600"/><use href="#wmt" x="-55.000" y="175.400"/><use href="#wmt" x="163.100" y="9.600"/><use href="#wmt" x="163.100" y="175.400"/></g></pattern></defs><rect width="1928" height="1011" fill="url(#wmp)"/></svg>
</body></html>
